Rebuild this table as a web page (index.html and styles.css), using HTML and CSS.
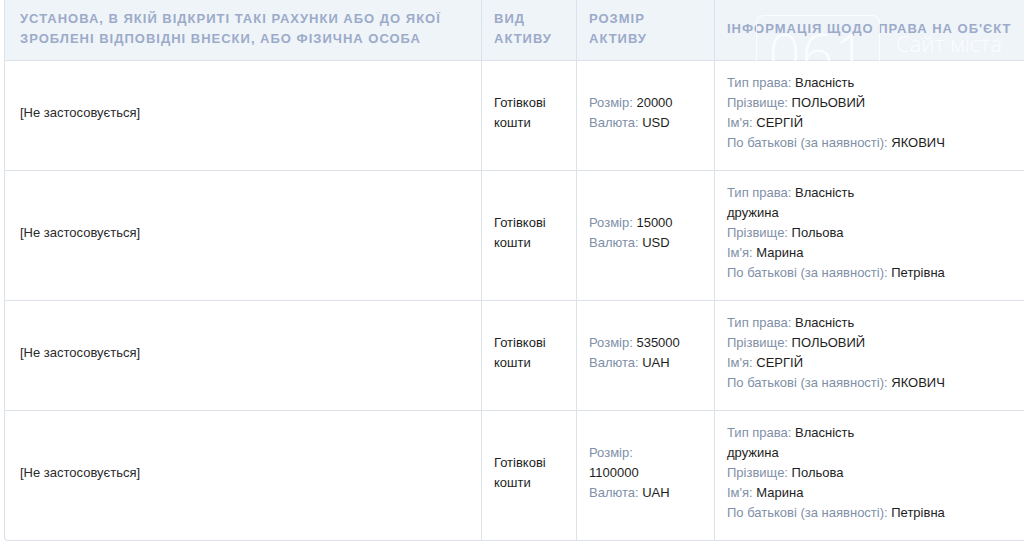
FILE: index.html
```html
<!DOCTYPE html>
<html lang="uk">
<head>
<meta charset="utf-8">
<title>Декларація</title>
<link rel="stylesheet" href="styles.css">
</head>
<body>
<div class="page">
  <table class="decl">
    <colgroup>
      <col class="c1"><col class="c2"><col class="c3"><col class="c4">
    </colgroup>
    <thead>
      <tr>
        <th>Установа, в якій відкриті такі рахунки або до якої зроблені відповідні внески, або фізична особа</th>
        <th>Вид активу</th>
        <th>Розмір активу</th>
        <th>Інформація щодо права на об'єкт</th>
      </tr>
    </thead>
    <tbody>
      <tr>
        <td class="first">[Не застосовується]</td>
        <td>Готівкові<br>кошти</td>
        <td><span class="lb">Розмір:</span> 20000<br><span class="lb">Валюта:</span> USD</td>
        <td><span class="lb">Тип права:</span> Власність<br><span class="lb">Прізвище:</span> ПОЛЬОВИЙ<br><span class="lb">Ім'я:</span> СЕРГІЙ<br><span class="lb">По батькові (за наявності):</span> ЯКОВИЧ</td>
      </tr>
      <tr>
        <td class="first">[Не застосовується]</td>
        <td>Готівкові<br>кошти</td>
        <td><span class="lb">Розмір:</span> 15000<br><span class="lb">Валюта:</span> USD</td>
        <td><span class="lb">Тип права:</span> Власність<br>дружина<br><span class="lb">Прізвище:</span> Польова<br><span class="lb">Ім'я:</span> Марина<br><span class="lb">По батькові (за наявності):</span> Петрівна</td>
      </tr>
      <tr>
        <td class="first">[Не застосовується]</td>
        <td>Готівкові<br>кошти</td>
        <td><span class="lb">Розмір:</span> 535000<br><span class="lb">Валюта:</span> UAH</td>
        <td><span class="lb">Тип права:</span> Власність<br><span class="lb">Прізвище:</span> ПОЛЬОВИЙ<br><span class="lb">Ім'я:</span> СЕРГІЙ<br><span class="lb">По батькові (за наявності):</span> ЯКОВИЧ</td>
      </tr>
      <tr class="last">
        <td class="first">[Не застосовується]</td>
        <td>Готівкові<br>кошти</td>
        <td><span class="lb">Розмір:</span><br>1100000<br><span class="lb">Валюта:</span> UAH</td>
        <td><span class="lb">Тип права:</span> Власність<br>дружина<br><span class="lb">Прізвище:</span> Польова<br><span class="lb">Ім'я:</span> Марина<br><span class="lb">По батькові (за наявності):</span> Петрівна</td>
      </tr>
    </tbody>
  </table>
  <div class="watermark" aria-hidden="true">
    <span class="wm-box"><span class="wm-num">061</span></span>
    <span class="wm-text">Сайт міста</span>
  </div>
</div>
</body>
</html>
```

FILE: styles.css
```css
html, body {
  margin: 0;
  padding: 0;
  background: #ffffff;
  overflow: hidden;
}

.page {
  position: relative;
  width: 1024px;
  height: 543px;
  overflow: hidden;
  padding-left: 4px;
  box-sizing: border-box;
  font-family: "Liberation Sans", Arial, sans-serif;
  font-size: 13px;
  color: #222;
}

.decl {
  border-collapse: separate;
  border-spacing: 0;
  table-layout: fixed;
  width: 1050px;
  border-left: 1px solid #dde2ea;
  border-bottom: 1px solid #dde2ea;
  border-bottom-left-radius: 4px;
}

.c1 { width: 477px; }
.c2 { width: 95px; }
.c3 { width: 138px; }
.c4 { width: 340px; }

.decl th {
  background: #eff4f9;
  color: #9cabc9;
  font-weight: bold;
  font-size: 13px;
  text-transform: uppercase;
  letter-spacing: 1px;
  text-align: left;
  line-height: 20px;
  padding: 9px 10px 11px 12px;
  vertical-align: middle;
  border-right: 1px solid #dde2ea;
  border-bottom: 1px solid #dde2ea;
}

.decl th:first-child {
  padding-left: 15px;
}

.decl td {
  line-height: 20px;
  padding: 12px 12px 17px 12px;
  vertical-align: middle;
  border-right: 1px solid #dde2ea;
  border-bottom: 1px solid #dde2ea;
  color: #1e1e1e;
}

.decl tr.last td {
  border-bottom: none;
}

.decl td.first {
  padding-left: 15px;
  color: #2a2a2a;
}

.lb {
  color: #8090a8;
}

.watermark {
  position: absolute;
  left: 756px;
  top: 15px;
  height: 46px;
  overflow: hidden;
  display: flex;
  align-items: flex-start;
  gap: 16px;
  pointer-events: none;
}

.wm-box {
  display: block;
  width: 124px;
  height: 46px;
  overflow: hidden;
  border: 1.5px solid rgba(255, 255, 255, 0.75);
  border-bottom: none;
  border-radius: 8px 8px 0 0;
  box-sizing: border-box;
  text-align: center;
  padding-top: 29px;
}

.wm-num {
  display: inline-block;
  color: rgba(255, 255, 255, 0.7);
  font-family: "Open Sans", sans-serif;
  font-weight: 300;
  font-size: 56px;
  line-height: 14px;
  letter-spacing: 1px;
}

.wm-text {
  margin-top: 15px;
  color: rgba(255, 255, 255, 0.85);
  font-family: "Open Sans", sans-serif;
  font-weight: 300;
  font-size: 22px;
  line-height: 26px;
}
```
